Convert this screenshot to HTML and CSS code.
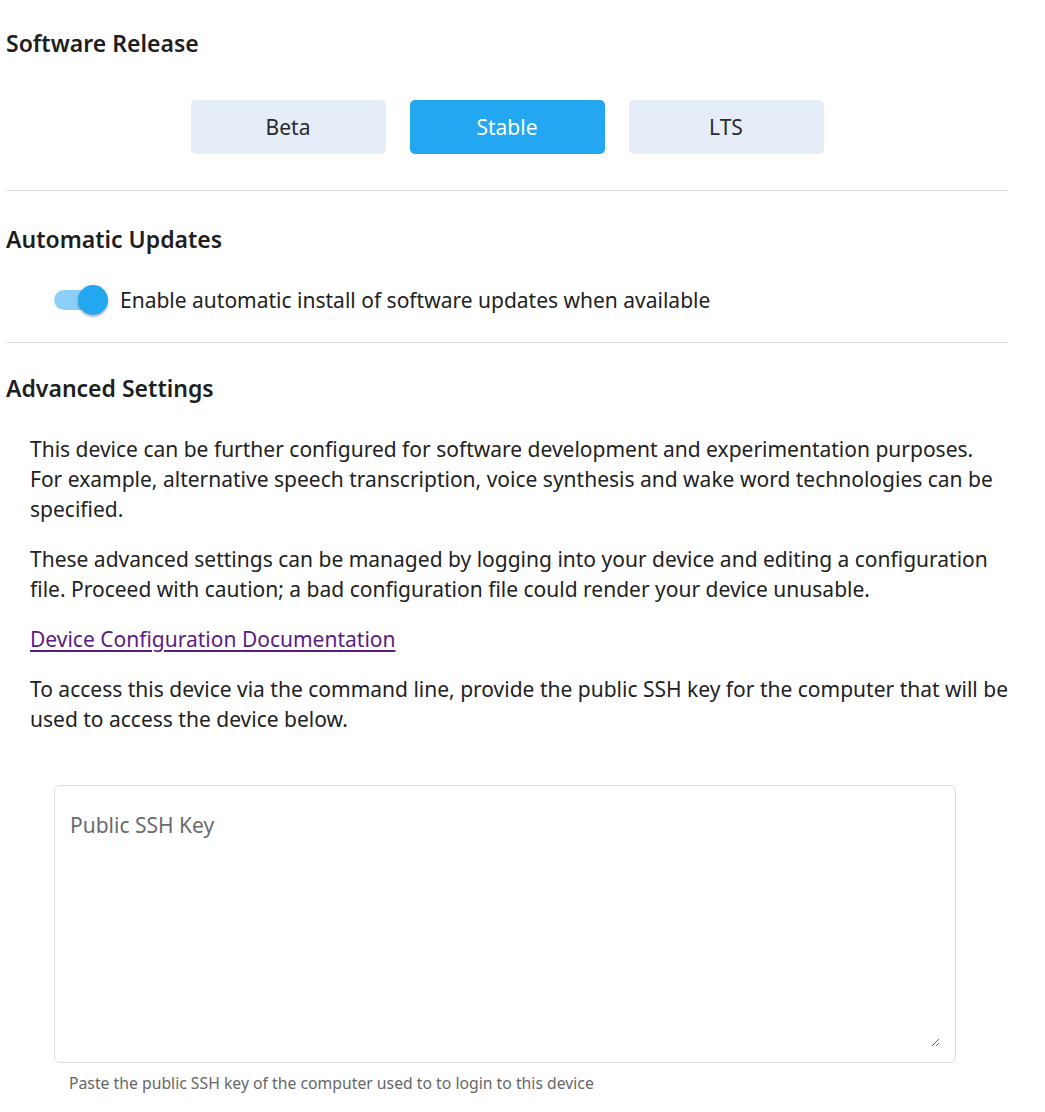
FILE: index.html
```html
<!DOCTYPE html>
<html lang="en">
<head>
<meta charset="utf-8">
<title>Settings</title>
<link rel="stylesheet" href="styles.css">
</head>
<body>
<main class="page">
  <section class="section section-release">
    <h2 class="heading">Software Release</h2>
    <div class="release-group">
      <button class="release-btn">Beta</button>
      <button class="release-btn active">Stable</button>
      <button class="release-btn">LTS</button>
    </div>
  </section>
  <hr class="divider">
  <section class="section section-updates">
    <h2 class="heading">Automatic Updates</h2>
    <label class="toggle-row">
      <span class="switch"><span class="track"></span><span class="thumb"></span></span>
      <span class="toggle-label">Enable automatic install of software updates when available</span>
    </label>
  </section>
  <hr class="divider">
  <section class="section section-advanced">
    <h2 class="heading">Advanced Settings</h2>
    <div class="body-text">
      <p>This device can be further configured for software development and experimentation purposes. For example, alternative speech transcription, voice synthesis and wake word technologies can be specified.</p>
      <p>These advanced settings can be managed by logging into your device and editing a configuration file. Proceed with caution; a bad configuration file could render your device unusable.</p>
      <p><a class="doc-link" href="#">Device Configuration Documentation</a></p>
      <p>To access this device via the command line, provide the public SSH key for the computer that will be used to access the device below.</p>
    </div>
    <div class="field">
      <div class="textarea-box">
        <textarea class="ssh-input" placeholder="Public SSH Key"></textarea>
      </div>
      <div class="helper">Paste the public SSH key of the computer used to to login to this device</div>
    </div>
  </section>
</main>
</body>
</html>
```

FILE: styles.css
```css
* { box-sizing: border-box; }
html, body { margin: 0; padding: 0; background: #fff; }
body {
  font-family: "Noto Sans", "Open Sans", sans-serif;
  color: #222;
}
.page {
  width: 1002px;
  margin-left: 6px;
  padding-top: 28px;
}
.heading {
  margin: 0;
  font-size: 23px;
  font-weight: 600;
  line-height: 30px;
  color: #1e1e1e;
}
.release-group {
  display: flex;
  justify-content: center;
  gap: 24px;
  margin-top: 42px;
  padding-bottom: 36px;
}
.release-btn {
  width: 195px;
  height: 54px;
  border: none;
  border-radius: 5px;
  background: #e5edf8;
  color: #2a2a2a;
  font-family: "Noto Sans", "Open Sans", sans-serif;
  font-size: 21px;
  padding: 0;
}
.release-btn.active {
  background: #22a7f0;
  color: #fff;
}
.divider {
  margin: 0;
  border: none;
  border-top: 1px solid #e2e2e2;
}
.section-updates { padding-top: 33px; }
.section-advanced { padding-top: 30px; }
.toggle-row {
  display: flex;
  align-items: center;
  gap: 12px;
  margin-top: 29px;
  margin-left: 48px;
  padding-bottom: 25px;
  font-size: 21px;
}
.switch {
  position: relative;
  width: 54px;
  height: 34px;
  display: block;
  flex: none;
}
.track {
  position: absolute;
  left: 0;
  top: 7px;
  width: 51px;
  height: 20px;
  border-radius: 10px;
  background: #8ccff7;
}
.thumb {
  position: absolute;
  left: 24px;
  top: 2px;
  width: 30px;
  height: 30px;
  border-radius: 50%;
  background: #22a7f0;
  box-shadow: 0 2px 2px rgba(0,0,0,0.22), 0 1px 4px rgba(0,0,0,0.12);
}
.toggle-label { line-height: 30px; }
.body-text {
  padding-left: 24px;
  margin-top: 31px;
  font-size: 21px;
  line-height: 30px;
}
.body-text p { margin: 0 0 20px; }
.doc-link { color: #5b1a86; text-decoration: underline; text-underline-offset: 3px; }
.field {
  margin-left: 48px;
  width: 902px;
  margin-top: 51px;
}
.textarea-box {
  border: 1px solid #dedede;
  border-radius: 6px;
  height: 278px;
  padding: 24px 15px 15px 15px;
  display: flex;
}
.ssh-input {
  flex: 1;
  border: none;
  outline: none;
  resize: vertical;
  font-family: "Noto Sans", "Open Sans", sans-serif;
  font-size: 21px;
  line-height: 30px;
  color: #222;
  padding: 0;
  height: 237px;
}
.ssh-input::placeholder { color: #6b6b6b; }
.helper {
  margin: 9px 0 0 15px;
  font-size: 15.75px;
  line-height: 22px;
  color: #666;
}
```
